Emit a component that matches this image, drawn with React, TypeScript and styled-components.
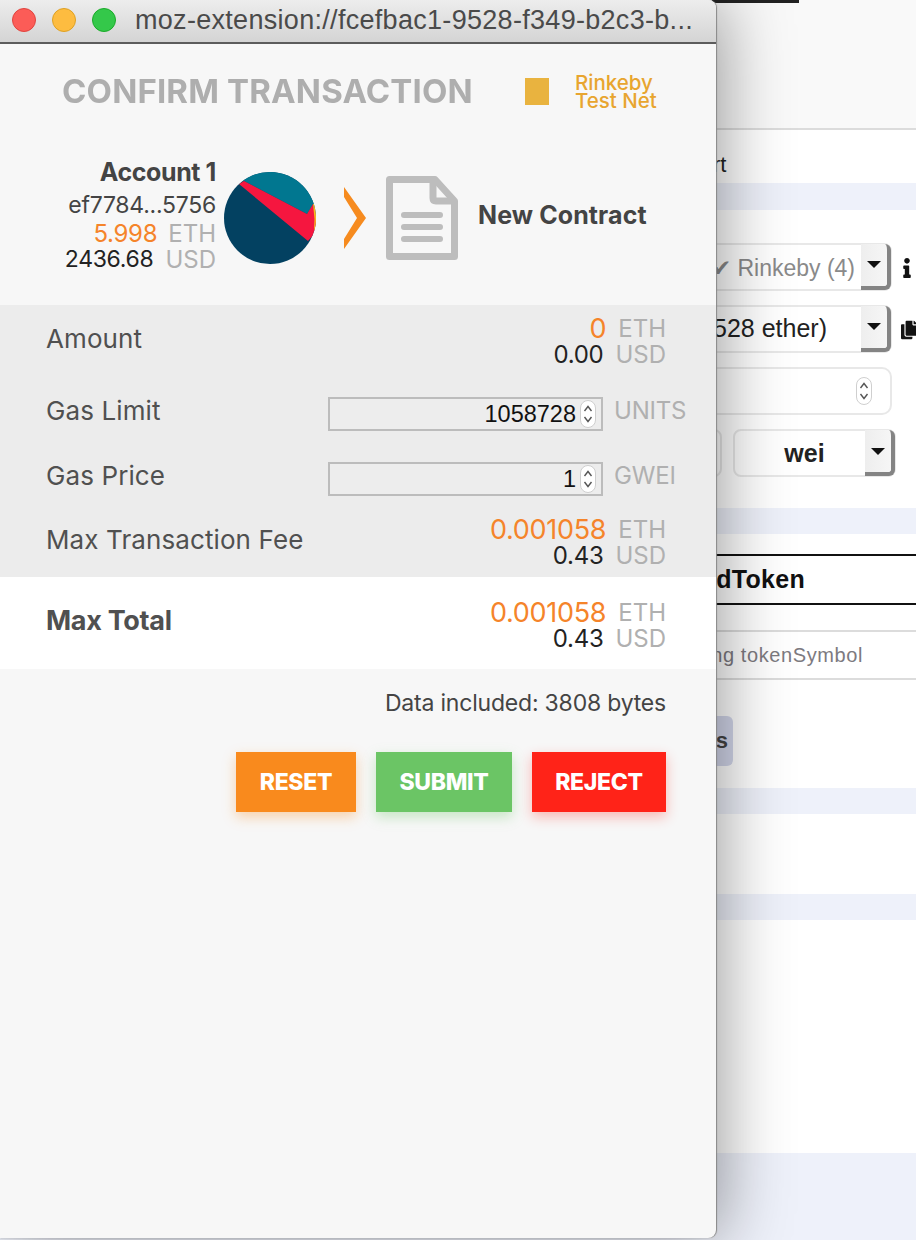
import React from "react"
import styled, { createGlobalStyle } from "styled-components"
import { FaInfo, FaCopy } from "react-icons/fa"

const GlobalStyle = createGlobalStyle`
  html, body { margin: 0; padding: 0; background: #fff; }
  * { box-sizing: border-box; }
`

const Shot = styled.div`
  position: relative;
  width: 916px;
  height: 1240px;
  overflow: hidden;
  background: #fff;
  font-family: "Liberation Sans", Arial, sans-serif;
`

/* the page behind the popup */
const Page = styled.div`
  display: flex;
  flex-direction: column;
  width: 916px;
  height: 1240px;
`

const PageHeader = styled.div`
  height: 130px;
  background: #f9f9f9;
  border-bottom: 2px solid #dcdcdc;
`

const TopMark = styled.div`
  width: 87px;
  height: 3px;
  margin-left: 712px;
  background: #222;
`

const TabRow = styled.div`
  height: 53px;
  padding: 22px 0 0 680px;
  font-size: 22px;
  color: #222;
`

const Band = styled.div<{ $h?: number; $grow?: boolean }>`
  height: ${(p) => p.$h ?? 26}px;
  flex: ${(p) => (p.$grow ? "1" : "none")};
  background: #eef1fa;
`

const Form = styled.div`
  display: flex;
  flex-direction: column;
  align-items: flex-start;
  gap: 15px;
  padding: 33px 0 31px 600px;
`

const FormRow = styled.div`
  display: flex;
  align-items: center;
  gap: 9px;
  height: 47px;
`

const Select = styled.div<{ $w: number; $pad: number; $muted?: boolean; $bold?: boolean }>`
  display: flex;
  align-items: center;
  justify-content: ${(p) => (p.$bold ? "center" : "flex-end")};
  position: relative;
  width: ${(p) => p.$w}px;
  height: 48px;
  padding-right: ${(p) => p.$pad}px;
  padding-top: ${(p) => (p.$muted ? 3 : 0)}px;
  border: 2px solid #e8e8e8;
  border-radius: 8px;
  background: #fff;
  font-size: ${(p) => (p.$muted ? 23 : 25)}px;
  font-weight: ${(p) => (p.$bold ? 700 : 400)};
  color: ${(p) => (p.$muted ? "#8a8a8a" : "#222")};
  white-space: nowrap;
`

const SelectArrow = styled.span`
  position: absolute;
  top: -1px;
  right: -1px;
  bottom: -1px;
  width: 30px;
  display: flex;
  align-items: center;
  justify-content: center;
  background: linear-gradient(90deg, #eee, #f6f6f6);
  border-right: 4px solid #848484;
  border-bottom: 4px solid #848484;
  border-radius: 0 6px 6px 0;

  &::after {
    content: "";
    border-left: 7px solid transparent;
    border-right: 7px solid transparent;
    border-top: 7px solid #111;
  }
`

const SideIcon = styled.span<{ $size: number; $nudge?: number }>`
  display: flex;
  width: 16px;
  margin: 2px 0 0 ${(p) => p.$nudge ?? 0}px;
  font-size: ${(p) => p.$size}px;
  color: #111;
`

const ValueBox = styled.div`
  display: flex;
  align-items: center;
  justify-content: flex-end;
  width: 292px;
  height: 48px;
  padding-right: 18px;
  border: 2px solid #e8e8e8;
  border-radius: 10px;
`

const SelectPair = styled.div`
  display: flex;
  align-items: center;
  gap: 11px;
`

const StubSelect = styled.div`
  width: 122px;
  height: 48px;
  border: 2px solid #e8e8e8;
  border-radius: 8px;
`

const TokenTitle = styled.div`
  display: flex;
  align-items: center;
  justify-content: flex-end;
  height: 51px;
  margin-top: 20px;
  padding-right: 111px;
  border-top: 2px solid #111;
  border-bottom: 2px solid #111;
  font-size: 25px;
  font-weight: 700;
  letter-spacing: 0.3px;
  color: #111;
`

const TokenError = styled.div`
  display: flex;
  align-items: center;
  justify-content: flex-end;
  height: 50px;
  margin-top: 25px;
  padding-right: 53px;
  border-top: 2px solid #dcdcdc;
  border-bottom: 2px solid #dcdcdc;
  font-size: 20px;
  letter-spacing: 0.6px;
  color: #7d7a80;
`

const ActionRow = styled.div`
  display: flex;
  height: 108px;
  padding: 36px 0 0 640px;
`

const ActionButton = styled.div`
  display: flex;
  align-items: center;
  justify-content: flex-end;
  width: 93px;
  height: 50px;
  padding-right: 5px;
  border-radius: 6px;
  background: #d4d8ec;
  font-size: 22px;
  font-weight: 700;
  color: #444;
`

const Spacer = styled.div<{ $h: number }>`
  height: ${(p) => p.$h}px;
`

/* the popup window lying over it */
const Popup = styled.div`
  position: absolute;
  top: 0;
  left: 0;
  width: 716px;
  height: 1238px;
  display: flex;
  flex-direction: column;
  border-radius: 0 8px 8px 0;
  background: #f7f7f7;
  box-shadow: 1px 0 1px #888, 4px 0 70px rgba(0, 0, 0, 0.42);
  overflow: hidden;
  font-family: Inter, "Noto Sans", sans-serif;
`

const TitleBar = styled.div`
  display: flex;
  align-items: center;
  gap: 16px;
  flex: none;
  height: 44px;
  padding: 0 0 2px 12px;
  border-bottom: 2px solid #5c5c5c;
  background: linear-gradient(#ededed, #d4d4d4);
`

const Light = styled.span<{ $color: string; $edge: string }>`
  flex: none;
  width: 24px;
  height: 24px;
  border-radius: 50%;
  background: ${(p) => p.$color};
  border: 1px solid ${(p) => p.$edge};
`

const TitleUrl = styled.div`
  margin-left: 3px;
  font-family: "Liberation Sans", Arial, sans-serif;
  font-size: 27px;
  letter-spacing: 0.3px;
  color: #4a4a4a;
  white-space: nowrap;
`

const HeadRow = styled.div`
  display: flex;
  align-items: center;
  height: 94px;
  padding: 0 0 0 62px;
`

const Heading = styled.h1`
  width: 463px;
  margin: 0;
  font-size: 33px;
  font-weight: 700;
  letter-spacing: 0.15px;
  color: #aeaeae;
  white-space: nowrap;
  filter: blur(0.4px);
`

const NetworkDot = styled.span`
  flex: none;
  width: 24px;
  height: 27px;
  margin-right: 26px;
  background: #e9b33f;
  filter: blur(0.6px);
`

const NetworkName = styled.div`
  padding-top: 2px;
  font-size: 20.5px;
  font-weight: 500;
  line-height: 18px;
  color: #e8a52f;
`

const AccountRow = styled.div`
  display: flex;
  align-items: center;
  height: 167px;
  padding-left: 20px;
`

const AccountInfo = styled.div`
  display: flex;
  flex-direction: column;
  align-items: flex-end;
  width: 196px;
  padding-bottom: 14px;
  margin-right: 8px;
  font-size: 23px;
  color: #444;
`

const AccountName = styled.div`
  margin-bottom: 4px;
  font-size: 25px;
  font-weight: 700;
  letter-spacing: -0.4px;
`

const Address = styled.div`
  margin-bottom: 1px;
  letter-spacing: -0.25px;
`

const Identicon = styled.svg`
  flex: none;
  width: 92px;
  height: 92px;
  margin-top: -8px;
`

const Chevron = styled.svg`
  flex: none;
  width: 22px;
  height: 62px;
  margin: -8px 20px 0 28px;
`

const DocIcon = styled.svg`
  flex: none;
  width: 72px;
  height: 84px;
  margin: -8px 20px 0 0;
`

const ToName = styled.div`
  margin-top: -13px;
  font-size: 25px;
  font-weight: 700;
  letter-spacing: 0.1px;
  color: #444;
`

const GrayBand = styled.div`
  display: flex;
  flex-direction: column;
  flex: none;
  height: 272px;
  background: #ececec;
`

const DetailRow = styled.div<{ $h: number; $white?: boolean }>`
  display: flex;
  align-items: center;
  flex: none;
  height: ${(p) => p.$h}px;
  padding: 0 50px ${(p) => (p.$white ? 2 : 0)}px 46px;
  background: ${(p) => (p.$white ? "#fff" : "transparent")};
`

const GasRow = styled(DetailRow)`
  padding-right: 30px;
`

const Label = styled.div<{ $bold?: boolean }>`
  flex: 1;
  margin-bottom: ${(p) => (p.$bold ? 4 : 0)}px;
  font-size: ${(p) => (p.$bold ? 27 : 26)}px;
  font-weight: ${(p) => (p.$bold ? 700 : 400)};
  letter-spacing: ${(p) => (p.$bold ? "-0.3px" : "0.1px")};
  color: #505050;
  white-space: nowrap;
`

const Amounts = styled.div`
  display: flex;
  flex-direction: column;
  align-items: flex-end;
  margin-top: 7px;
`

const AmountLine = styled.div<{ $gap?: number }>`
  display: flex;
  align-items: center;
  gap: ${(p) => p.$gap ?? 12}px;
  height: 26px;
`

const Num = styled.span<{ $accent?: boolean; $size?: number }>`
  font-size: ${(p) => p.$size ?? 24}px;
  letter-spacing: -0.3px;
  color: ${(p) => (p.$accent ? "#f5842a" : "#222")};
`

const Unit = styled.span`
  font-size: 24px;
  color: #b0b0b0;
`

const InputBox = styled.div`
  display: flex;
  align-items: center;
  justify-content: flex-end;
  gap: 4px;
  width: 275px;
  height: 34px;
  margin-top: 8px;
  padding-right: 5px;
  border: 2px solid #bcbcbc;
  background: #ededed;
  font-family: "Liberation Sans", Arial, sans-serif;
  font-size: 23.5px;
  color: #111;
`

const Spinner = styled.svg`
  flex: none;
  width: 16px;
  height: 28px;
`

const GasUnit = styled(Unit)`
  width: 72px;
  margin-left: 11px;
  letter-spacing: -0.2px;
`

const DataNote = styled.div`
  margin-top: 20px;
  padding-right: 50px;
  text-align: right;
  font-size: 23px;
  line-height: 28px;
  letter-spacing: -0.2px;
  color: #444;
`

const ButtonRow = styled.div`
  display: flex;
  justify-content: flex-end;
  gap: 20px;
  margin-top: 35px;
  padding-right: 50px;
`

const ConfirmButton = styled.button<{ $w: number; $bg: string; $glow: string }>`
  width: ${(p) => p.$w}px;
  height: 60px;
  padding: 0;
  border: 0;
  background: ${(p) => p.$bg};
  box-shadow: 0 5px 12px ${(p) => p.$glow};
  font-family: Inter, "Noto Sans", sans-serif;
  font-size: 23px;
  font-weight: 800;
  letter-spacing: -0.3px;
  color: #fff;
`

const NumberSpinner = () => (
  <Spinner viewBox="0 0 16 28">
    <rect x="0.5" y="0.5" width="15" height="27" rx="7.5" fill="#fff" stroke="#cfcfcf" />
    <path d="M4.5 11 8 6.5 11.5 11M4.5 17 8 21.5 11.500 17" fill="none" stroke="#555" strokeWidth="1.4" />
  </Spinner>
)

const Amount = ({ eth, usd }: { eth: string; usd: string }) => (
  <Amounts>
    <AmountLine>
      <Num $accent $size={27}>
        {eth}
      </Num>
      <Unit>ETH</Unit>
    </AmountLine>
    <AmountLine>
      <Num>{usd}</Num>
      <Unit>USD</Unit>
    </AmountLine>
  </Amounts>
)

const BackgroundPage = () => (
  <Page>
    <PageHeader>
      <TopMark />
    </PageHeader>
    <TabRow>Start</TabRow>
    <Band $h={27} />
    <Form>
      <FormRow>
        <Select $w={292} $pad={35} $muted>
          ✔ Rinkeby (4)
          <SelectArrow />
        </Select>
        <SideIcon $size={20} $nudge={-2}>
          <FaInfo />
        </SideIcon>
      </FormRow>
      <FormRow>
        <Select $w={292} $pad={63}>
          (5.998528 ether)
          <SelectArrow />
        </Select>
        <SideIcon $size={26}>
          <FaCopy />
        </SideIcon>
      </FormRow>
      <FormRow>
        <ValueBox>
          <NumberSpinner />
        </ValueBox>
      </FormRow>
      <SelectPair>
        <StubSelect />
        <Select $w={163} $pad={20} $bold>
          wei
          <SelectArrow />
        </Select>
      </SelectPair>
    </Form>
    <Band />
    <TokenTitle>MintedToken</TokenTitle>
    <TokenError>Missing tokenSymbol</TokenError>
    <ActionRow>
      <ActionButton>Details</ActionButton>
    </ActionRow>
    <Band />
    <Spacer $h={80} />
    <Band />
    <Spacer $h={233} />
    <Band $grow />
  </Page>
)

export default function App() {
  return (
    <Shot>
      <GlobalStyle />
      <BackgroundPage />
      <Popup>
        <TitleBar>
          <Light $color="#fc5c57" $edge="#e0443e" />
          <Light $color="#fdbc40" $edge="#dea123" />
          <Light $color="#34c84a" $edge="#1aab29" />
          <TitleUrl>moz-extension://fcefbac1-9528-f349-b2c3-b...</TitleUrl>
        </TitleBar>
        <HeadRow>
          <Heading>CONFIRM TRANSACTION</Heading>
          <NetworkDot />
          <NetworkName>
            Rinkeby
            <br />
            Test Net
          </NetworkName>
        </HeadRow>
        <AccountRow>
          <AccountInfo>
            <AccountName>Account 1</AccountName>
            <Address>ef7784...5756</Address>
            <AmountLine $gap={11}>
              <Num $accent>5.998</Num>
              <Unit>ETH</Unit>
            </AmountLine>
            <AmountLine>
              <Num $size={23}>2436.68</Num>
              <Unit>USD</Unit>
            </AmountLine>
          </AccountInfo>
          <Identicon viewBox="0 0 92 92">
            <defs>
              <clipPath id="identicon-clip">
                <circle cx="46" cy="46" r="46" />
              </clipPath>
            </defs>
            <g clipPath="url(#identicon-clip)">
              <rect width="92" height="92" fill="#034161" />
              <polygon points="10,-5 20,9 83,42 92,28 92,-5" fill="#017790" />
              <polygon points="15,12 20,9 83,42 89,32 92,47 92,60 84,69" fill="#f5163f" />
              <polygon points="89,32 92,32 92,58 90,58 90.5,47" fill="#f9b81e" />
            </g>
          </Identicon>
          <Chevron viewBox="0 0 22 62">
            <polygon points="0,0 22,31 0,62 0,52 13,31 0,10" fill="#f68b1f" />
          </Chevron>
          <DocIcon viewBox="0 0 72 84">
            <path
              d="M3.5 3.5H49L68.5 25V80.500H3.500Z"
              fill="none"
              stroke="#bdbdbd"
              strokeWidth="7"
              strokeLinejoin="round"
            />
            <path d="M47 4V22Q47 25 50 25H68" fill="none" stroke="#bdbdbd" strokeWidth="7" />
            <path d="M18 39H54M18 51H54M18 63H54" fill="none" stroke="#bdbdbd" strokeWidth="6" strokeLinecap="round" />
          </DocIcon>
          <ToName>New Contract</ToName>
        </AccountRow>
        <GrayBand>
          <DetailRow $h={66}>
            <Label>Amount</Label>
            <Amount eth="0" usd="0.00" />
          </DetailRow>
          <GasRow $h={78}>
            <Label>Gas Limit</Label>
            <InputBox>
              1058728
              <NumberSpinner />
            </InputBox>
            <GasUnit>UNITS</GasUnit>
          </GasRow>
          <GasRow $h={52}>
            <Label>Gas Price</Label>
            <InputBox>
              1
              <NumberSpinner />
            </InputBox>
            <GasUnit>GWEI</GasUnit>
          </GasRow>
          <DetailRow $h={76}>
            <Label>Max Transaction Fee</Label>
            <Amount eth="0.001058" usd="0.43" />
          </DetailRow>
        </GrayBand>
        <DetailRow $h={92} $white>
          <Label $bold>Max Total</Label>
          <Amount eth="0.001058" usd="0.43" />
        </DetailRow>
        <DataNote>Data included: 3808 bytes</DataNote>
        <ButtonRow>
          <ConfirmButton $w={120} $bg="#f98a1d" $glow="rgba(249,138,29,.35)">
            RESET
          </ConfirmButton>
          <ConfirmButton $w={136} $bg="#6bc565" $glow="rgba(107,197,101,.35)">
            SUBMIT
          </ConfirmButton>
          <ConfirmButton $w={134} $bg="#ff2318" $glow="rgba(255,35,24,.3)">
            REJECT
          </ConfirmButton>
        </ButtonRow>
      </Popup>
    </Shot>
  )
}
